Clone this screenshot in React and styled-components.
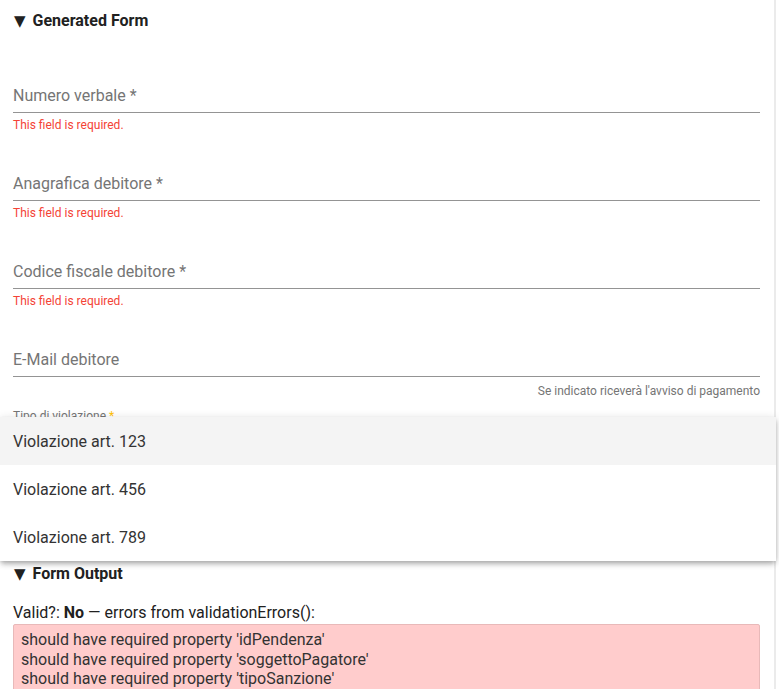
import React from 'react';
import styled, { createGlobalStyle } from 'styled-components';

const GlobalStyle = createGlobalStyle`
  body {
    margin: 0;
    background: #fff;
    font-family: Roboto, "Liberation Sans", Arial, sans-serif;
    color: rgba(0, 0, 0, 0.87);
    overflow: hidden;
  }
`;

const Frame = styled.div`
  position: relative;
  width: 776px;
  height: 689px;
  box-sizing: border-box;
  border-right: 2px solid #ebebeb;
  padding: 11px 14px 0 13px;
`;

const Summary = styled.div`
  font-size: 16px;
  font-weight: 700;
  line-height: 20px;
  color: #212121;
  margin-top: ${p => p.top || 0}px;
  display: flex;
  align-items: center;
`;

const Arrow = styled.span`
  font-family: "DejaVu Sans", sans-serif;
  font-size: 15px;
  margin: 0 7px 0 1px;
`;

const Field = styled.div`
  margin-top: ${p => p.top || 0}px;
  margin-bottom: 42px;
`;

const InputLine = styled.div`
  font-size: 16px;
  line-height: 20px;
  color: #757575;
  padding-bottom: 6px;
  border-bottom: 1px solid #949494;
`;

const SubText = styled.div`
  font-size: 12px;
  line-height: 14px;
  margin-top: ${p => p.hint ? 7 : 5}px;
  color: ${p => p.hint ? '#757575' : '#f44336'};
  text-align: ${p => p.hint ? 'right' : 'left'};
`;

const FloatLabel = styled.div`
  font-size: 12px;
  line-height: 14px;
  color: #757575;
  margin-top: -31px;
  span { color: #ffc107; }
`;

const Menu = styled.div`
  position: absolute;
  left: 0;
  top: 417px;
  width: 776px;
  background: #fff;
  border-radius: 0 0 4px 4px;
  box-shadow: 0 2px 4px -1px rgba(0,0,0,.2), 0 4px 5px 0 rgba(0,0,0,.14), 0 1px 10px 0 rgba(0,0,0,.12);
  z-index: 2;
`;

const Option = styled.div`
  height: 48px;
  display: flex;
  align-items: center;
  padding-left: 13px;
  font-size: 16px;
  color: #333;
  background: ${p => p.active ? '#f4f4f4' : '#fff'};
`;

const ValidLine = styled.div`
  margin-top: 19px;
  font-size: 16px;
  line-height: 20px;
  color: #212121;
  b { font-weight: 700; }
`;

const ErrorBox = styled.pre`
  margin: 1px 0 0;
  padding: 5px 7px;
  background: #ffcccc;
  border: 1px solid #e8b9b9;
  border-radius: 2px;
  font-family: Roboto, "Liberation Sans", Arial, sans-serif;
  font-size: 16px;
  line-height: 19.5px;
  color: #333;
  white-space: pre;
`;

const fields = [
  { label: 'Numero verbale *', error: true },
  { label: 'Anagrafica debitore *', error: true },
  { label: 'Codice fiscale debitore *', error: true },
  { label: 'E-Mail debitore', hint: "Se indicato riceverà l'avviso di pagamento" },
];

const options = ['Violazione art. 123', 'Violazione art. 456', 'Violazione art. 789'];

export default function App() {
  return (
    <>
      <GlobalStyle />
      <Frame>
        <Summary><Arrow>▼</Arrow>Generated Form</Summary>
        {fields.map((f, i) => (
          <Field key={f.label} top={i === 0 ? 55 : 0}>
            <InputLine>{f.label}</InputLine>
            {f.error && <SubText>This field is required.</SubText>}
            {f.hint && <SubText hint>{f.hint}</SubText>}
          </Field>
        ))}
        <FloatLabel>Tipo di violazione <span>*</span></FloatLabel>
        <Summary top={141}><Arrow>▼</Arrow>Form Output</Summary>
        <ValidLine>Valid?: <b>No</b> — errors from validationErrors():</ValidLine>
        <ErrorBox>{`should have required property 'idPendenza'
should have required property 'soggettoPagatore'
should have required property 'tipoSanzione'`}</ErrorBox>
        <Menu>
          {options.map((o, i) => (
            <Option key={o} active={i === 0}>{o}</Option>
          ))}
        </Menu>
      </Frame>
    </>
  );
}
